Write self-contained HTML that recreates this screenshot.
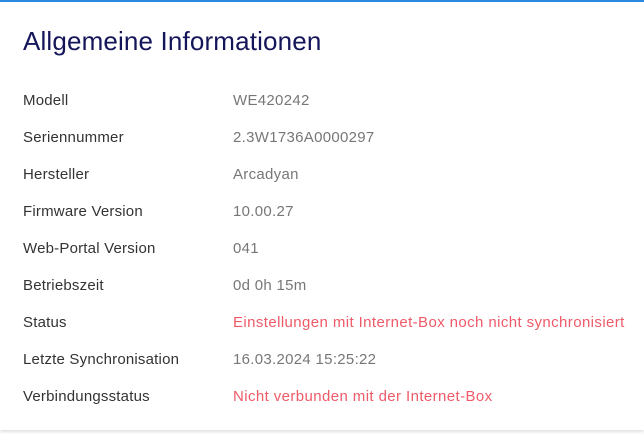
<!DOCTYPE html>
<html><head><meta charset="utf-8"><style>
body{margin:0;width:644px;height:446px;background:#fff;font-family:"Liberation Sans",sans-serif;overflow:hidden;position:relative}
.card{position:absolute;left:0;top:0;width:644px;height:430px;border-top:2px solid #2b8ae0;box-sizing:border-box;box-shadow:0 2px 3px rgba(0,0,0,.12);background:#fff}
h1{position:absolute;left:23px;top:24px;margin:0;font-weight:normal;font-size:26px;color:#15155a;letter-spacing:0.15px}
.r{position:absolute;left:23px;font-size:15px;line-height:18px;color:#333;white-space:nowrap;letter-spacing:0.2px}
.v{position:absolute;left:233px;font-size:15px;line-height:18px;color:#777;white-space:nowrap;letter-spacing:0.3px}
.red{color:#ee5a68;letter-spacing:0.4px}
</style></head><body>
<div class="card">
<h1>Allgemeine Informationen</h1>
<div class="r" style="top:90px">Modell</div><div class="v" style="top:90px">WE420242</div>
<div class="r" style="top:127px">Seriennummer</div><div class="v" style="top:127px">2.3W1736A0000297</div>
<div class="r" style="top:164px">Hersteller</div><div class="v" style="top:164px">Arcadyan</div>
<div class="r" style="top:201px">Firmware Version</div><div class="v" style="top:201px">10.00.27</div>
<div class="r" style="top:238px">Web-Portal Version</div><div class="v" style="top:238px">041</div>
<div class="r" style="top:275px">Betriebszeit</div><div class="v" style="top:275px">0d 0h 15m</div>
<div class="r" style="top:312px">Status</div><div class="v red" style="top:312px">Einstellungen mit Internet-Box noch nicht synchronisiert</div>
<div class="r" style="top:349px">Letzte Synchronisation</div><div class="v" style="top:349px">16.03.2024 15:25:22</div>
<div class="r" style="top:386px">Verbindungsstatus</div><div class="v red" style="top:386px">Nicht verbunden mit der Internet-Box</div>
</div>
</body></html>
